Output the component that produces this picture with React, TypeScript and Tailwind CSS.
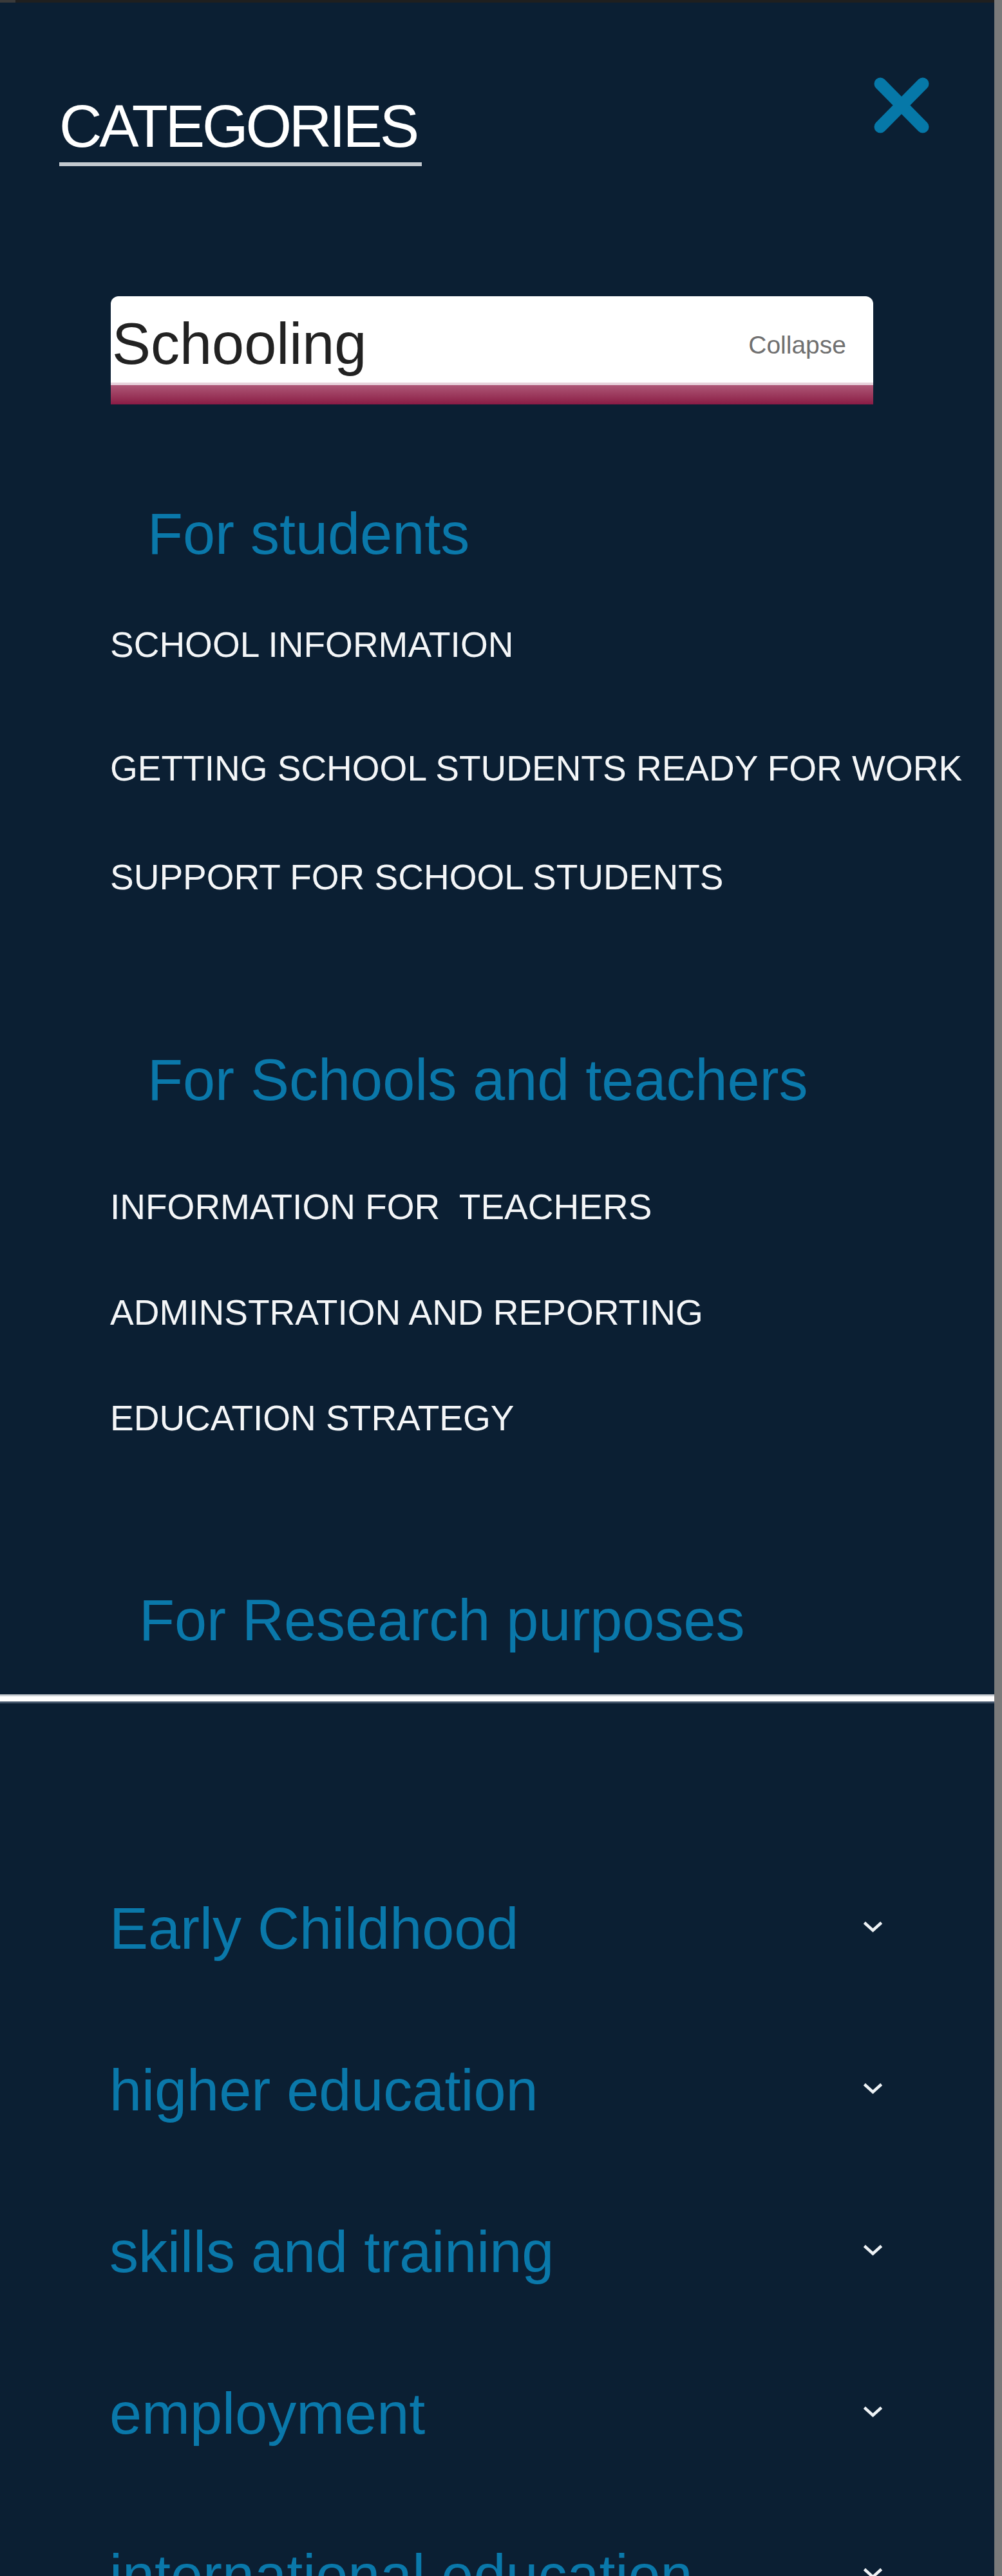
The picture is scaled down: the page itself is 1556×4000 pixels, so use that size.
import React from "react";

const font = "font-['Liberation_Sans',Arial,sans-serif]";

function Chevron() {
  return (
    <svg width="33" height="21" viewBox="0 0 33 21" className="mt-[32px] shrink-0">
      <polyline points="5,5 16.5,15.5 28,5" fill="none" stroke="#eef2f5" strokeWidth="4.5" strokeLinecap="square" />
    </svg>
  );
}

function SubItem({ children, mt }: { children: React.ReactNode; mt: string }) {
  return (
    <div className={`${mt} ml-[171px] h-[56px] text-[55px] leading-[56px] text-[#f4f6f8] whitespace-pre`}>{children}</div>
  );
}

export default function App() {
  const list = ["Early Childhood", "higher education", "skills and training", "employment", "international education"];
  return (
    <div className={`${font} flex h-[4000px] w-full overflow-hidden bg-[#0b1f33]`}>
      <div className="min-w-0 flex-1">
        <div className="flex h-[4px] bg-[#1f1f1f]">
          <div className="w-[24px] bg-[#3a3a3a]" />
        </div>

        {/* header */}
        <div className="flex items-start justify-between pl-[92px] pr-[100px] pt-[115px]">
          <div className="mt-[31px] w-[563px] border-b-[6px] border-[#c3c9cf] pb-[10px]">
            <div className="h-[92px] text-[92px] leading-none tracking-[-0.045em] text-white">CATEGORIES</div>
          </div>
          <svg width="88" height="89" viewBox="0 0 88 89" className="shrink-0">
            <line x1="11" y1="11" x2="77" y2="78" stroke="#0678a8" strokeWidth="19" strokeLinecap="round" />
            <line x1="77" y1="11" x2="11" y2="78" stroke="#0678a8" strokeWidth="19" strokeLinecap="round" />
          </svg>
        </div>

        {/* Schooling card */}
        <div className="ml-[172px] mr-[188px] mt-[202px] overflow-hidden rounded-t-[12px]">
          <div className="flex h-[134px] items-start justify-between bg-white pl-[2px] pr-[42px]">
            <span className="mt-[29px] h-[90px] text-[90px] leading-none text-[#222222]">Schooling</span>
            <span className="mt-[56px] text-[39px] leading-none text-[#707070]">Collapse</span>
          </div>
          <div className="h-[34px] border-t-[4px] border-[#e8d2dc] bg-gradient-to-b from-[#ad5677] to-[#8a1a45]" />
        </div>

        {/* For students */}
        <div className="ml-[229px] mt-[156px] h-[90px] text-[90px] leading-none text-[#0a78aa]">For students</div>
        <SubItem mt="mt-[99px]">SCHOOL INFORMATION</SubItem>
        <SubItem mt="mt-[136px]">GETTING SCHOOL STUDENTS READY FOR WORK</SubItem>
        <SubItem mt="mt-[113px]">SUPPORT FOR SCHOOL STUDENTS</SubItem>

        {/* For Schools and teachers */}
        <div className="ml-[229px] mt-[242px] h-[90px] text-[90px] leading-none text-[#0a78aa]">For Schools and teachers</div>
        <SubItem mt="mt-[124px]">INFORMATION FOR  TEACHERS</SubItem>
        <SubItem mt="mt-[108px]">ADMINSTRATION AND REPORTING</SubItem>
        <SubItem mt="mt-[108px]">EDUCATION STRATEGY</SubItem>

        {/* For Research purposes */}
        <div className="ml-[216px] mt-[241px] h-[90px] text-[90px] leading-none text-[#0a78aa]">For Research purposes</div>

        {/* divider */}
        <div className="mt-[70px] h-[14px] border-t-[3px] border-b-[3px] border-t-[#cbd0d5] border-b-[#43556a] bg-white" />

        {/* other categories */}
        <div className="mt-[305px] flex flex-col pl-[170px] pr-[172px]">
          {list.map((item) => (
            <div key={item} className="flex h-[251px] shrink-0 items-start justify-between">
              <span className="h-[90px] text-[90px] leading-none text-[#0a78aa]">{item}</span>
              <Chevron />
            </div>
          ))}
        </div>
      </div>
      <div className="w-[12px] shrink-0 bg-[#7a7a7a]" />
    </div>
  );
}
